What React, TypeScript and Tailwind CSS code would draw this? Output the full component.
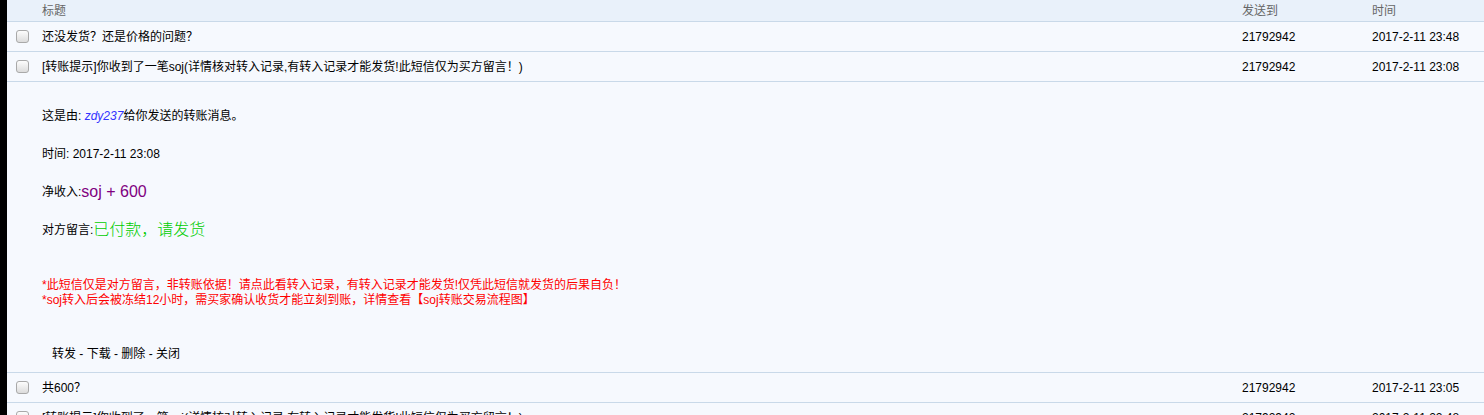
const font = { fontFamily: '"Liberation Sans", "Noto Sans CJK SC", sans-serif' }

type Msg = { title: React.ReactNode; to: string; time: string }

function Checkbox() {
  return (
    <span className="block h-[13px] w-[13px] rounded-[3px] border border-[#a9a9a9] bg-gradient-to-b from-[#fdfdfd] to-[#dcdcdc]" />
  )
}

function Row({ title, to, time }: Msg) {
  return (
    <div className="grid h-[30px] shrink-0 grid-cols-[35px_1200px_130px_1fr] items-center border-b border-[#c9d9e9] bg-[#f6f9fe] text-[12px] text-black">
      <div className="flex pl-[9px]">
        <Checkbox />
      </div>
      <div className="truncate">{title}</div>
      <div>{to}</div>
      <div>{time}</div>
    </div>
  )
}

function Detail() {
  return (
    <div className="shrink-0 border-b border-[#c9d9e9] bg-[#f6f9fe] pb-[10px] pl-[35px] pt-[26px] text-[12px] text-black">
      <div className="flex flex-col gap-[22px]">
        <div className="flex h-[16px] items-center">
          这是由: <span className="italic text-[#3333ff]">&nbsp;zdy237</span>给你发送的转账消息。
        </div>
        <div className="flex h-[16px] items-center">时间: 2017-2-11 23:08</div>
        <div className="flex h-[16px] items-center">
          净收入:<span className="text-[16px] font-light text-[#800080]">soj + 600</span>
        </div>
        <div className="flex h-[16px] items-center">
          对方留言:<span className="text-[16px] font-light text-[#00cc00]">已付款，请发货</span>
        </div>
      </div>
      <div className="mt-[40px] flex flex-col text-[12px] leading-[15px] text-[#ff0000]">
        <div>*此短信仅是对方留言，非转账依据！请点此看转入记录，有转入记录才能发货!仅凭此短信就发货的后果自负！</div>
        <div>*soj转入后会被冻结12小时，需买家确认收货才能立刻到账，详情查看【soj转账交易流程图】</div>
      </div>
      <div className="mt-[38px] flex h-[16px] items-center pl-[10px]">
        转发 - 下载 - 删除 - 关闭
      </div>
    </div>
  )
}

export default function App() {
  const rows: Msg[] = [
    { title: "还没发货？还是价格的问题？", to: "21792942", time: "2017-2-11 23:48" },
    {
      title: "[转账提示]你收到了一笔soj(详情核对转入记录,有转入记录才能发货!此短信仅为买方留言！)",
      to: "21792942",
      time: "2017-2-11 23:08"
    }
  ]
  return (
    <div className="flex h-[415px] w-[1484px] overflow-hidden bg-[#f6f9fe]" style={font}>
      <div className="w-[7px] shrink-0 bg-black" />
      <div className="flex min-w-0 flex-1 flex-col">
        <div className="grid h-[22px] shrink-0 grid-cols-[35px_1200px_130px_1fr] items-center border-b border-[#c9d9e9] bg-[#e9f1fa] text-[12px] text-[#666]">
          <div />
          <div>标题</div>
          <div>发送到</div>
          <div>时间</div>
        </div>
        {rows.map((r) => (
          <Row key={r.time} {...r} />
        ))}
        <Detail />
        <Row title="共600？" to="21792942" time="2017-2-11 23:05" />
        <Row
          title="[转账提示]你收到了一笔soj(详情核对转入记录,有转入记录才能发货!此短信仅为买方留言！)"
          to="21792942"
          time="2017-2-11 22:48"
        />
      </div>
    </div>
  )
}
